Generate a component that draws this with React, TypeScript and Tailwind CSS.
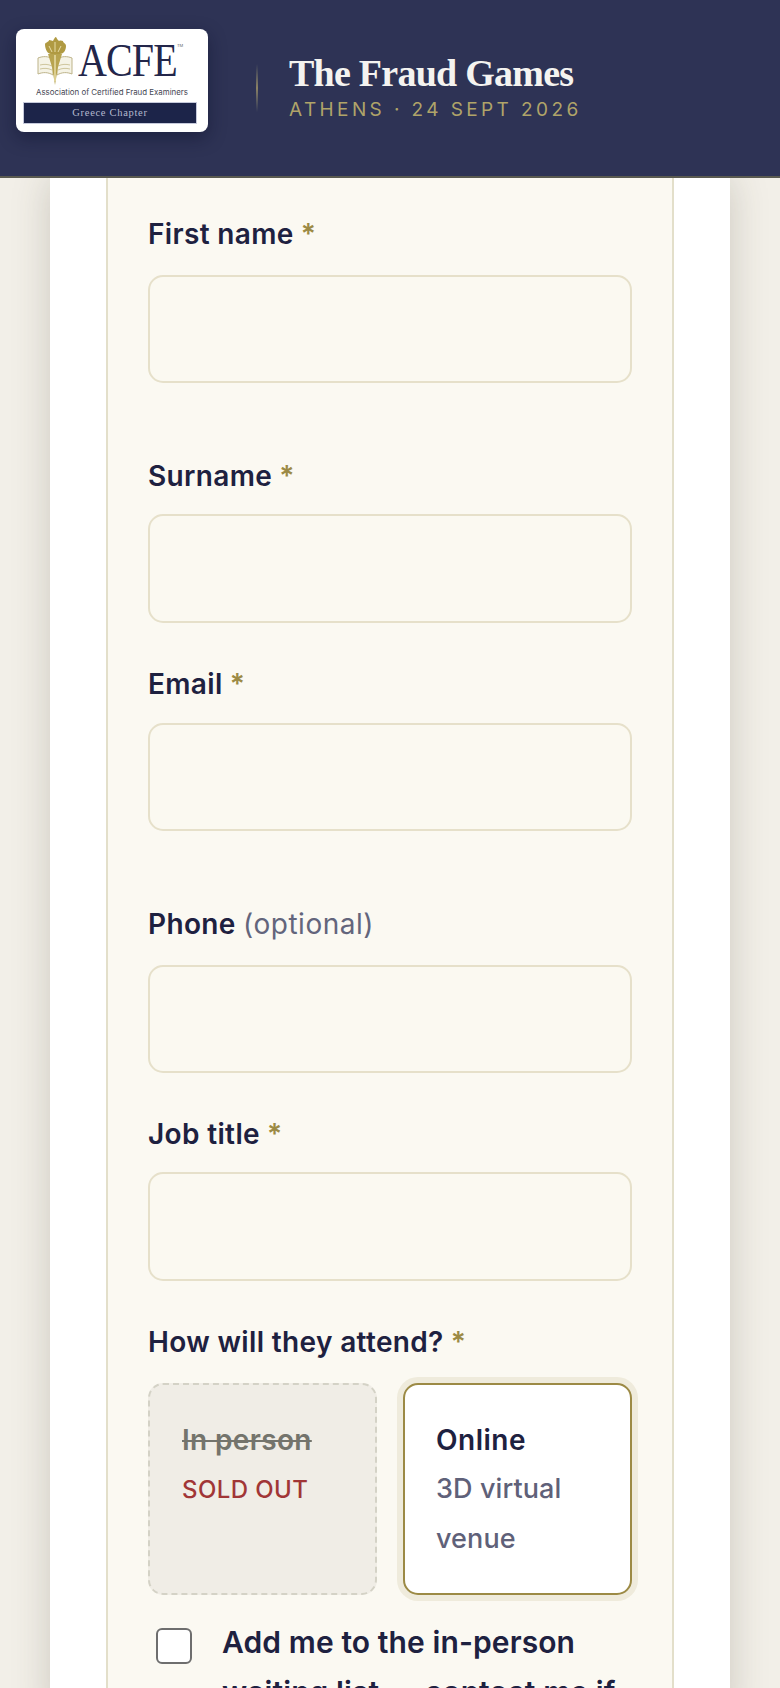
const sans = "font-['Inter','Liberation_Sans',sans-serif]";

function Star() {
  return <span className="ml-[7px] text-[#9c8a45]">*</span>;
}

function Field({ label, className, gap }: { label: React.ReactNode; className: string; gap: string }) {
  return (
    <div className={className}>
      <div className="h-[36px] text-[28px] leading-[36px] font-semibold tracking-[0.35px] text-[#1e2140]">{label}</div>
      <div className={`${gap} h-[108.5px] rounded-[15px] border-2 border-[#e6e0ca] bg-[#fbf9f1]`} />
    </div>
  );
}

function Torch() {
  return (
    <svg width="36" height="48" viewBox="0 0 36 48" className="shrink-0">
      <path d="M1 21c5-2 10-2 15 1v16c-5-3-10-3-15-1z" fill="#f5f3e6" stroke="#bdb389" strokeWidth="1" />
      <path d="M35 21c-5-2-10-2-15 1v16c5-3 10-3 15-1z" fill="#f5f3e6" stroke="#bdb389" strokeWidth="1" />
      <path d="M3 28c4-1 8-1 12 1M3 32c4-1 8-1 12 1M33 28c-4-1-8-1-12 1M33 32c-4-1-8-1-12 1" stroke="#cfc69d" strokeWidth="1" fill="none" />
      <path d="M11 17h14l-4 13-3 18-3-18z" fill="#b8a44f" />
      <path d="M18 18v26" stroke="#e7dca6" strokeWidth="1.5" />
      <path d="M8 7c1-2 4-2 4-4 2 0 3 1 4 1 1-2 2-4 3-4 1 2 2 3 3 4 2-1 3 0 4 0 0 2 3 2 3 5 0 5-3 8-6 8H14c-3 0-6-4-6-10z" fill="#b09a42" />
      <path d="M12 9l3 6M18 5v10M24 9l-3 6" stroke="#e7dca6" strokeWidth="1" />
    </svg>
  );
}

function Logo() {
  return (
    <div className="flex h-[103px] w-[192px] shrink-0 flex-col items-start rounded-[8px] bg-white px-[7px] pt-[8px] shadow-[0_6px_18px_rgba(10,14,40,0.45)]">
      <div className="ml-[14px] flex h-[48px] items-start">
        <Torch />
        <div className="mt-[0.5px] ml-[5px] w-[99px] origin-left scale-x-[0.87] font-['Liberation_Serif',serif] text-[46px] leading-[46px] tracking-[-1px] whitespace-nowrap text-[#23264a]">ACFE</div>
        <div className="mt-[7px] text-[4px] leading-[4px] text-[#666]">TM</div>
      </div>
      <div className="mt-[2px] ml-[13px] text-[7.9px] leading-[10px] whitespace-nowrap text-[#444653]">Association of Certified Fraud Examiners</div>
      <div className="mt-[5px] flex h-[22px] w-[174px] items-center justify-center border border-[#c5c9db] bg-[#1c2449] font-['Liberation_Serif',serif] text-[10.5px] font-normal tracking-[0.7px] text-[#b4b9ce]">Greece Chapter</div>
    </div>
  );
}

export default function App() {
  return (
    <div className={`${sans} flex h-[1688px] w-[780px] flex-col overflow-hidden bg-[#f2efe8]`}>
      <header className="relative z-10 flex h-[178px] shrink-0 items-center border-b-2 border-[#5a5a50] bg-[#2e3355] pb-[15px] pl-[16px]">
        <Logo />
        <div className="mt-[15px] ml-[48px] h-[48px] w-[2px] bg-gradient-to-b from-[#2e3355] via-[#8b8264] to-[#2e3355]" />
        <div className="mt-[12px] ml-[31px]">
          <div className="font-['Liberation_Serif',serif] text-[38px] leading-[44px] font-bold tracking-[-0.75px] whitespace-nowrap text-[#f4f3f0]">The Fraud Games</div>
          <div className="mt-[3px] text-[19px] leading-[24px] tracking-[3.4px] whitespace-nowrap text-[#b0a469]">ATHENS · 24 SEPT 2026</div>
        </div>
      </header>
      <main className="mx-auto w-[680px] flex-1 bg-white px-[56px] shadow-[0_0_36px_rgba(70,65,45,0.22)]">
        <div className="h-full border-x-2 border-[#e3dfca] bg-[#fbf9f2] px-[40px] pt-[38px]">
          <Field label={<>First name<Star /></>} className="" gap="mt-[22.5px]" />
          <Field label={<>Surname<Star /></>} className="mt-[75px]" gap="mt-[20px]" />
          <Field label={<>Email<Star /></>} className="mt-[43.5px]" gap="mt-[20.5px]" />
          <Field label={<>Phone <span className="font-normal tracking-[0.5px] text-[#63657c]">(optional)</span></>} className="mt-[75px]" gap="mt-[22.5px]" />
          <Field label={<>Job title<Star /></>} className="mt-[43px]" gap="mt-[20px]" />
          <div className="mt-[43px] h-[36px] text-[28px] leading-[36px] font-semibold tracking-[0.35px] text-[#1e2140]">How will they attend?<Star /></div>
          <div className="mt-[23px] flex gap-[26px]">
            <div className="h-[212px] w-[229px] rounded-[15px] border-2 border-dashed border-[#d4d2c6] bg-[#f0ede6] pt-[33px] pl-[32px]">
              <div className="text-[28px] leading-[44px] font-semibold tracking-[0.35px] text-[#74746c] line-through">In person</div>
              <div className="mt-[12px] text-[24px] leading-[32px] font-medium tracking-[0.4px] text-[#a13636]">SOLD OUT</div>
            </div>
            <div className="h-[212px] w-[229px] rounded-[15px] border-2 border-[#9c8a45] bg-white pt-[33px] pl-[31px] shadow-[0_0_0_6px_#efebdc]">
              <div className="text-[28px] leading-[44px] font-semibold tracking-[0.5px] text-[#1e2140]">Online</div>
              <div className="mt-[2px] text-[27px] leading-[50px] font-medium tracking-[0.1px] text-[#5f6179]">3D virtual venue</div>
            </div>
          </div>
          <div className="mt-[34px] flex items-start">
            <div className="mt-[-1px] ml-[8px] h-[36px] w-[36px] shrink-0 rounded-[6px] border-2 border-[#6e6e6e] bg-white" />
            <div className="mt-[-12px] ml-[30px] w-[400px] text-[30px] leading-[50px] font-semibold tracking-[0.1px] text-[#1e2140]">Add me to the in-person waiting list — contact me if</div>
          </div>
        </div>
      </main>
    </div>
  );
}
